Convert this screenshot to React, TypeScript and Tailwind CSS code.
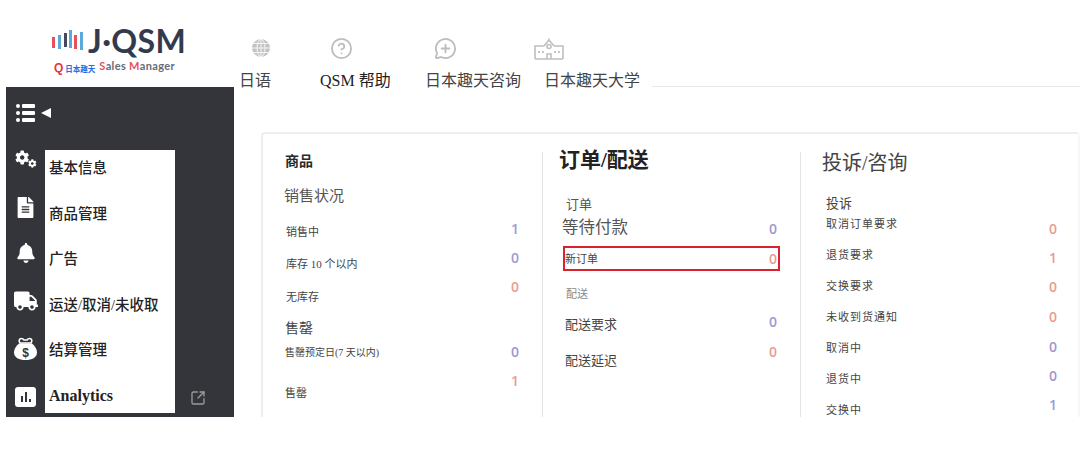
import React from 'react';
import { FaBell, FaCog, FaFileAlt, FaTruck } from 'react-icons/fa';
import { CircleHelp, MessageCirclePlus, SquareArrowOutUpRight } from 'lucide-react';

const serif = 'font-["Liberation_Serif","Noto_Sans_CJK_SC",serif]';

const Logo: React.FC = () => (
  <div className="w-[234px] pl-[52px] pt-[26px]">
    <div className="flex items-center h-[30px]">
      <svg width="33" height="22" viewBox="0 0 33 22" className="mr-[3px]">
        <rect x="0" y="7" width="3" height="11" fill="#e8505b" />
        <rect x="6" y="5" width="3" height="14" fill="#5aa9dc" />
        <rect x="12" y="3" width="3" height="14" fill="#444a5c" />
        <rect x="17" y="0" width="3" height="18" fill="#5aa9dc" />
        <rect x="22" y="5" width="3" height="14" fill="#e8505b" />
        <rect x="28" y="2" width="3" height="18" fill="#5aa9dc" />
      </svg>
      <span className='font-["Lato",sans-serif] font-bold text-[32px] leading-[26px] tracking-[0.4px] text-[#333a4d]'>J·QSM</span>
    </div>
    <div className="flex items-end h-[14px] mt-[5px] ml-[2px]">
      <span className='font-["Liberation_Sans",sans-serif] font-bold text-[12px] leading-[13px] text-[#e8333c] mr-[2px]'>Q</span>
      <span className='font-["Noto_Sans_CJK_SC",sans-serif] font-bold text-[7.5px] leading-[12px] text-[#1f6fe0]'>日本趣天</span>
      <span className='ml-[4px] mb-[3px] font-["Lato",sans-serif] font-bold text-[11px] leading-[12px] tracking-[0.35px] text-[#666b78]'>
        <span className="text-[#e8505b]">S</span>ales <span className="text-[#e8505b]">M</span>anager
      </span>
    </div>
  </div>
);

const GlobeIcon: React.FC = () => (
  <svg width="18" height="18" viewBox="0 0 18 18" fill="none" stroke="#fff" strokeWidth="0.8">
    <circle cx="9" cy="9" r="9" fill="#c4c4c4" stroke="none" />
    <ellipse cx="9" cy="9" rx="4" ry="8.6" />
    <path d="M9 0v18M0 9h18M1.5 4.5h15M1.5 13.5h15" />
  </svg>
);

const SchoolIcon: React.FC = () => (
  <svg width="30" height="22" viewBox="0 0 30 22" fill="none" stroke="#bfbfbf" strokeWidth="1.6">
    <path d="M1 21V8h9M29 21V8h-9M1 21h28M10 8l5-6 5 6M15 0.5v2" />
    <circle cx="15" cy="8.5" r="2" />
    <path d="M13 21v-5h4v5" />
    <path d="M5 13v2M9 13v2M21 13v2M25 13v2" strokeWidth="1.8" />
  </svg>
);

const Nav: React.FC = () => (
  <div className={`flex-1 flex items-start ${serif} text-[16px] leading-[20px] text-[#444]`}>
    <div className="w-[81px] ml-[5px]">
      <div className="h-[18px] mt-[39px] ml-[13px]"><GlobeIcon /></div>
      <div className="mt-[14px]">日语</div>
    </div>
    <div className="w-[105px] text-[#222]">
      <CircleHelp size={23} strokeWidth={1.9} className="text-[#bdbdbd] mt-[37px] ml-[10px]" />
      <div className="mt-[11px]">QSM 帮助</div>
    </div>
    <div className="w-[119px]">
      <MessageCirclePlus size={23} strokeWidth={1.9} className="text-[#bdbdbd] mt-[37px] ml-[9px]" />
      <div className="mt-[11px]">日本趣天咨询</div>
    </div>
    <div className="w-[106px]">
      <div className="h-[22px] mt-[38px] -ml-[10px]"><SchoolIcon /></div>
      <div className="mt-[11px]">日本趣天大学</div>
    </div>
    <div className="flex-1 h-px bg-[#e8e8e8] mt-[86px] ml-[2px]" />
  </div>
);

const BarsIcon: React.FC = () => (
  <div className="flex flex-col gap-[3px]">
    {[0, 1, 2].map((i) => (
      <div key={i} className="flex gap-[2px]">
        <div className="w-[4px] h-[4px] rounded-full bg-white" />
        <div className="w-[13px] h-[4px] rounded-[1px] bg-white" />
      </div>
    ))}
  </div>
);

const GearsIcon: React.FC = () => (
  <div className="flex items-end w-[22px] h-[18px] ml-[1px]">
    <FaCog size={15} className="self-start" />
    <FaCog size={9} className="-ml-[1px]" />
  </div>
);

const PurseIcon: React.FC = () => (
  <svg width="23" height="23" viewBox="0 0 23 23">
    <path d="M6 6c-1.5-2-1-4.5 1.5-4.5 1.2 0 2 .8 2.5 1.5h3c.5-.7 1.3-1.5 2.5-1.5C18 1.500 18.500 4 17 6z" fill="none" stroke="#fff" strokeWidth="1.6" />
    <path d="M5 6.500h13c3 2.500 5 5.500 5 9 0 5-5 7.500-11.500 7.500S0 20.500 0 15.500c0-3.500 2-6.500 5-9z" fill="#fff" />
    <text x="11.500" y="19.500" textAnchor="middle" fontSize="12" fontWeight="700" fontFamily="Liberation Sans" fill="#34353a">$</text>
  </svg>
);

const ChartIcon: React.FC = () => (
  <div className="w-[21px] h-[20px] rounded-[3px] bg-white flex items-end justify-center gap-[2px] pb-[5px]">
    <div className="w-[2px] h-[6px] bg-[#34353a]" />
    <div className="w-[2px] h-[10px] bg-[#34353a]" />
    <div className="w-[2px] h-[3px] bg-[#34353a]" />
  </div>
);

const menu = ['基本信息', '商品管理', '广告', '运送/取消/未收取', '结算管理'];

const Sidebar: React.FC = () => (
  <div className="w-[228px] h-[330px] ml-[6px] bg-[#34353a] flex flex-col shrink-0">
    <div className="h-[63px] flex items-center pl-[10px] pb-[12px] gap-[6px]">
      <BarsIcon />
      <div className="w-0 h-0 border-y-[5px] border-y-transparent border-r-[10px] border-r-white" />
    </div>
    <div className="flex h-[263px]">
      <div className="w-[39px] flex flex-col items-center text-white">
        <GearsIcon />
        <FaFileAlt size={21} className="mt-[29px]" />
        <FaBell size={20} className="mt-[25px]" />
        <FaTruck size={24} className="mt-[26px]" />
        <div className="mt-[24px]"><PurseIcon /></div>
        <div className="mt-[27px]"><ChartIcon /></div>
      </div>
      <div className={`w-[130px] bg-white ${serif} font-medium text-[14.5px] text-[#222]`}>
        {menu.map((m) => (
          <div key={m} className="h-[45.6px] flex items-center pl-[4px] pb-[8px] whitespace-nowrap">{m}</div>
        ))}
        <div className="h-[45px] flex items-center pl-[4px] pb-[8px] text-[16px] font-bold">Analytics</div>
      </div>
      <div className="flex-1 flex items-end pl-[15px] pb-[7px]">
        <SquareArrowOutUpRight size={16} strokeWidth={2} className="text-[#9a9a9a]" />
      </div>
    </div>
  </div>
);

interface RowProps {
  label: string;
  value: number;
  red?: boolean;
  height: string;
  labelClass: string;
  numClass: string;
  text?: string;
}

const Row: React.FC<RowProps> = ({ label, value, red, height, labelClass, numClass, text = 'text-[11px] leading-[16px] text-[#444]' }) => (
  <div className={`flex justify-between items-start ${height}`}>
    <span className={`${text} ${labelClass} whitespace-nowrap`}>{label}</span>
    <span className={`font-["Open_Sans",sans-serif] font-semibold text-[14px] leading-[16px] ${red ? 'text-[#ec9a94]' : 'text-[#9d99d2]'} ${numClass}`}>{value}</span>
  </div>
);

const App: React.FC = () => (
  <div className="w-[1080px] h-[455px] bg-white flex flex-col overflow-hidden">
    <div className="h-[87px] flex shrink-0">
      <Logo />
      <Nav />
    </div>
    <div className="flex items-start">
      <Sidebar />
      <div className={`flex-1 ml-[27px] mt-[45px] h-[285px] overflow-hidden flex border-2 border-b-0 border-[#eeeeee] border-r-[#f8f8f8] rounded-t-[4px] ${serif}`}>
        <div className="w-[279px] pl-[22px] pr-[23px] pt-[18px] shrink-0">
          <div className="text-[14px] leading-[20px] font-bold text-[#2a2a2a]">商品</div>
          <div className="text-[15px] leading-[24px] mt-[12px] -ml-[1px] text-[#555]">销售状况</div>
          <Row label="销售中" value={1} height="h-[32px]" labelClass="mt-[16px] ml-[1px]" numClass="mt-[13px]" />
          <Row label="库存 10 个以内" value={0} height="h-[32px]" labelClass="mt-[16px] ml-[1px]" numClass="mt-[10px]" />
          <Row label="无库存" value={0} red height="h-[47px]" labelClass="mt-[17px] ml-[1px]" numClass="mt-[7px]" />
          <div className="text-[14px] leading-[20px] text-[#444]">售罄</div>
          <Row label="售罄预定日(7 天以内)" value={0} height="h-[30px]" labelClass="mt-[6px]" numClass="mt-[5px]" text="text-[10px] leading-[16px] text-[#444]" />
          <Row label="售罄" value={1} red height="h-[30px]" labelClass="mt-[16px]" numClass="mt-[4px]" />
        </div>
        <div className="w-[258px] mt-[18px] border-l border-[#e4e4e4] pl-[16px] pr-[20px] shrink-0">
          <div className="-mt-[6px] text-[21px] leading-[28px] font-bold text-[#222] whitespace-nowrap">订单/配送</div>
          <div className="mt-[22px] ml-[7px] text-[13px] leading-[18px] text-[#555]">订单</div>
          <Row
            label="等待付款"
            value={0}
            height="h-[32px] ml-[4px] pr-[2px]"
            labelClass="mt-[1px] -ml-[1px]"
            numClass="mt-[7px] mr-[1px]"
            text="text-[16.5px] leading-[26px] text-[#555]"
          />
          <div className="ml-[4px] h-[25px] border-2 border-[#d8232f] flex justify-between items-center pr-[1px]">
            <span className="text-[11px] leading-[16px] text-[#444]">新订单</span>
            <span className='font-["Open_Sans",sans-serif] font-semibold text-[14px] leading-[16px] text-[#ec9a94]'>0</span>
          </div>
          <div className="mt-[15px] ml-[7px] text-[11px] leading-[16px] text-[#888]">配送</div>
          <Row
            label="配送要求"
            value={0}
            height="h-[36px] ml-[6px] pr-[3px]"
            labelClass="mt-[14px]"
            numClass="mt-[12px]"
            text="text-[13px] leading-[18px] text-[#444]"
          />
          <Row
            label="配送延迟"
            value={0}
            red
            height="h-[36px] ml-[6px] pr-[3px]"
            labelClass="mt-[14px]"
            numClass="mt-[6px]"
            text="text-[13px] leading-[18px] text-[#444]"
          />
        </div>
        <div className="flex-1 mt-[18px] border-l border-[#e4e4e4] pl-[21px] pr-[21px]">
          <div className="-mt-[2px] text-[20px] leading-[26px] text-[#444] whitespace-nowrap">投诉/咨询</div>
          <div className="mt-[19px] ml-[4px] text-[13px] leading-[18px] text-[#444]">投诉</div>
          <div className="ml-[4px]">
            <Row label="取消订单要求" value={0} red height="h-[31px]" labelClass="mt-[3px] tracking-[1px]" numClass="mt-[8px]" />
            <Row label="退货要求" value={1} red height="h-[31px]" labelClass="mt-[3px] tracking-[1px]" numClass="mt-[6px]" />
            <Row label="交换要求" value={0} red height="h-[31px]" labelClass="mt-[3px] tracking-[1px]" numClass="mt-[4px]" />
            <Row label="未收到货通知" value={0} red height="h-[31px]" labelClass="mt-[3px] tracking-[1px]" numClass="mt-[3px]" />
            <Row label="取消中" value={0} height="h-[31px]" labelClass="mt-[3px] tracking-[1px]" numClass="mt-[2px]" />
            <Row label="退货中" value={0} height="h-[31px]" labelClass="mt-[3px] tracking-[1px]" numClass="mt-[0px]" />
            <Row label="交换中" value={1} height="h-[31px]" labelClass="mt-[3px] tracking-[1px]" numClass="-mt-[2px]" />
          </div>
        </div>
      </div>
    </div>
  </div>
);

export default App;
